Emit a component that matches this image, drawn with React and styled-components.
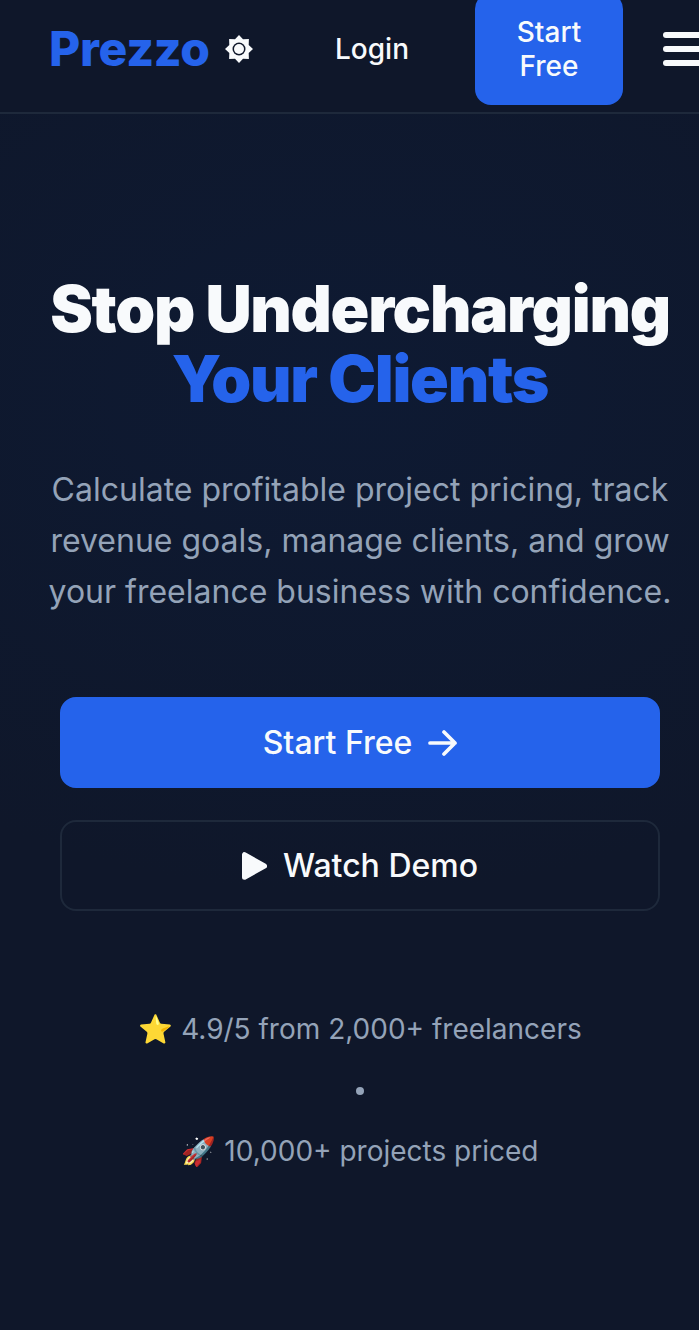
import React from 'react';
import styled, { createGlobalStyle } from 'styled-components';
import { Menu } from 'lucide-react';

const GlobalStyle = createGlobalStyle`
  html, body {
    margin: 0;
    padding: 0;
    background: #0f172a;
    font-family: Inter, "Noto Sans", sans-serif;
    overflow: hidden;
  }
  * { box-sizing: border-box; }
`;

const Page = styled.div`
  width: 699px;
  height: 1330px;
  overflow: hidden;
  background: #0f172a;
`;

const Header = styled.header`
  height: 114px;
  padding: 0 0 16px 49px;
  border-bottom: 2px solid #1e293b;
`;

const HeaderRow = styled.div`
  height: 98px;
  display: flex;
  align-items: center;
`;

const Logo = styled.div`
  flex: none;
  font-size: 48px;
  font-weight: 800;
  letter-spacing: -0.25px;
  color: #2563eb;
  line-height: 1;
  width: 160px;
  white-space: nowrap;
`;

const ThemeButton = styled.div`
  flex: none;
  width: 30px;
  height: 30px;
  margin-left: 15px;
  display: flex;
  align-items: center;
  justify-content: center;
`;

const LoginLink = styled.a`
  flex: none;
  margin-left: 81px;
  font-size: 28px;
  font-weight: 500;
  color: #f8fafc;
`;

const HeaderCta = styled.a`
  margin-left: 66px;
  width: 148px;
  height: 112px;
  flex: none;
  border-radius: 16px;
  background: #2563eb;
  color: #f8fafc;
  font-size: 28px;
  font-weight: 500;
  line-height: 34px;
  text-align: center;
  display: flex;
  align-items: center;
  justify-content: center;
`;

const MenuButton = styled.div`
  margin-left: 35px;
  flex: none;
  display: flex;
  color: #f8fafc;
`;

const Hero = styled.main`
  height: 1216px;
  padding: 160px 0 0 21px;
  background: radial-gradient(ellipse 700px 500px at 50% 280px, #0e1a33 0%, #0f172a 100%);
  display: flex;
  flex-direction: column;
  align-items: center;
`;

const Title = styled.h1`
  margin: 0;
  text-align: center;
  font-size: 64px;
  font-weight: 900;
  line-height: 70px;
  letter-spacing: -1.28px;
  color: #f8fafc;
  white-space: nowrap;
`;

const Accent = styled.span`
  display: block;
  color: #2563eb;
`;

const Subtitle = styled.p`
  margin: 50px 0 0;
  text-align: center;
  font-size: 32px;
  line-height: 51px;
  color: #94a3b8;
  white-space: nowrap;
`;

const Actions = styled.div`
  margin-top: 80px;
  width: 600px;
  display: flex;
  flex-direction: column;
  gap: 32px;
`;

const ActionButton = styled.a`
  height: 91px;
  border-radius: 16px;
  border: 2px solid ${p => (p.$primary ? '#2563eb' : '#1e293b')};
  background: ${p => (p.$primary ? '#2563eb' : 'transparent')};
  color: #f8fafc;
  font-size: 32px;
  font-weight: 500;
  display: flex;
  align-items: center;
  justify-content: center;
  gap: 16px;
`;

const Stats = styled.div`
  margin-top: 98px;
  display: flex;
  flex-direction: column;
  align-items: center;
  gap: 32px;
  font-size: 28px;
  line-height: 40px;
  color: #94a3b8;
`;

const Stat = styled.div`
  white-space: nowrap;
`;

const Dot = styled.div`
  width: 8px;
  height: 8px;
  border-radius: 50%;
  background: #94a3b8;
  margin: 6px 0 4px;
`;

const SunIcon = () => (
  <svg width="28" height="28" viewBox="0 0 28 28" aria-hidden="true">
    <path
      fill="#f8fafc"
      d="M14 0L18 4.3 23.9 4.1 23.7 10 28 14 23.7 18 23.9 23.9 18 23.7 14 28 10 23.7 4.1 23.9 4.3 18 0 14 4.3 10 4.1 4.1 10 4.3Z"
    />
    <circle cx="14" cy="14" r="6.5" fill="#0f172a" />
    <circle cx="14" cy="14" r="5" fill="#f8fafc" />
  </svg>
);

const ArrowIcon = () => (
  <svg width="29" height="26" viewBox="0 0 29 26" aria-hidden="true">
    <path
      fill="none"
      stroke="#f8fafc"
      strokeWidth="3.7"
      strokeLinecap="round"
      strokeLinejoin="round"
      d="M2 13H27M16 2L27 13 16 24"
    />
  </svg>
);

const PlayIcon = () => (
  <svg width="25" height="28" viewBox="0 0 25 28" aria-hidden="true">
    <path fill="#f8fafc" stroke="#f8fafc" strokeWidth="5" strokeLinejoin="round" d="M2.5 2.7v22.6l20-11.3z" />
  </svg>
);

export default function App() {
  return (
    <>
      <GlobalStyle />
      <Page>
        <Header>
          <HeaderRow>
            <Logo>Prezzo</Logo>
            <ThemeButton><SunIcon /></ThemeButton>
            <LoginLink>Login</LoginLink>
            <HeaderCta>Start<br />Free</HeaderCta>
            <MenuButton><Menu size={48} strokeWidth={3} /></MenuButton>
          </HeaderRow>
        </Header>
        <Hero>
          <Title>
            Stop Undercharging
            <Accent>Your Clients</Accent>
          </Title>
          <Subtitle>
            Calculate profitable project pricing, track<br />
            revenue goals, manage clients, and grow<br />
            your freelance business with confidence.
          </Subtitle>
          <Actions>
            <ActionButton $primary>
              Start Free <ArrowIcon />
            </ActionButton>
            <ActionButton>
              <PlayIcon /> Watch Demo
            </ActionButton>
          </Actions>
          <Stats>
            <Stat>⭐ 4.9/5 from 2,000+ freelancers</Stat>
            <Dot />
            <Stat>🚀 10,000+ projects priced</Stat>
          </Stats>
        </Hero>
      </Page>
    </>
  );
}
